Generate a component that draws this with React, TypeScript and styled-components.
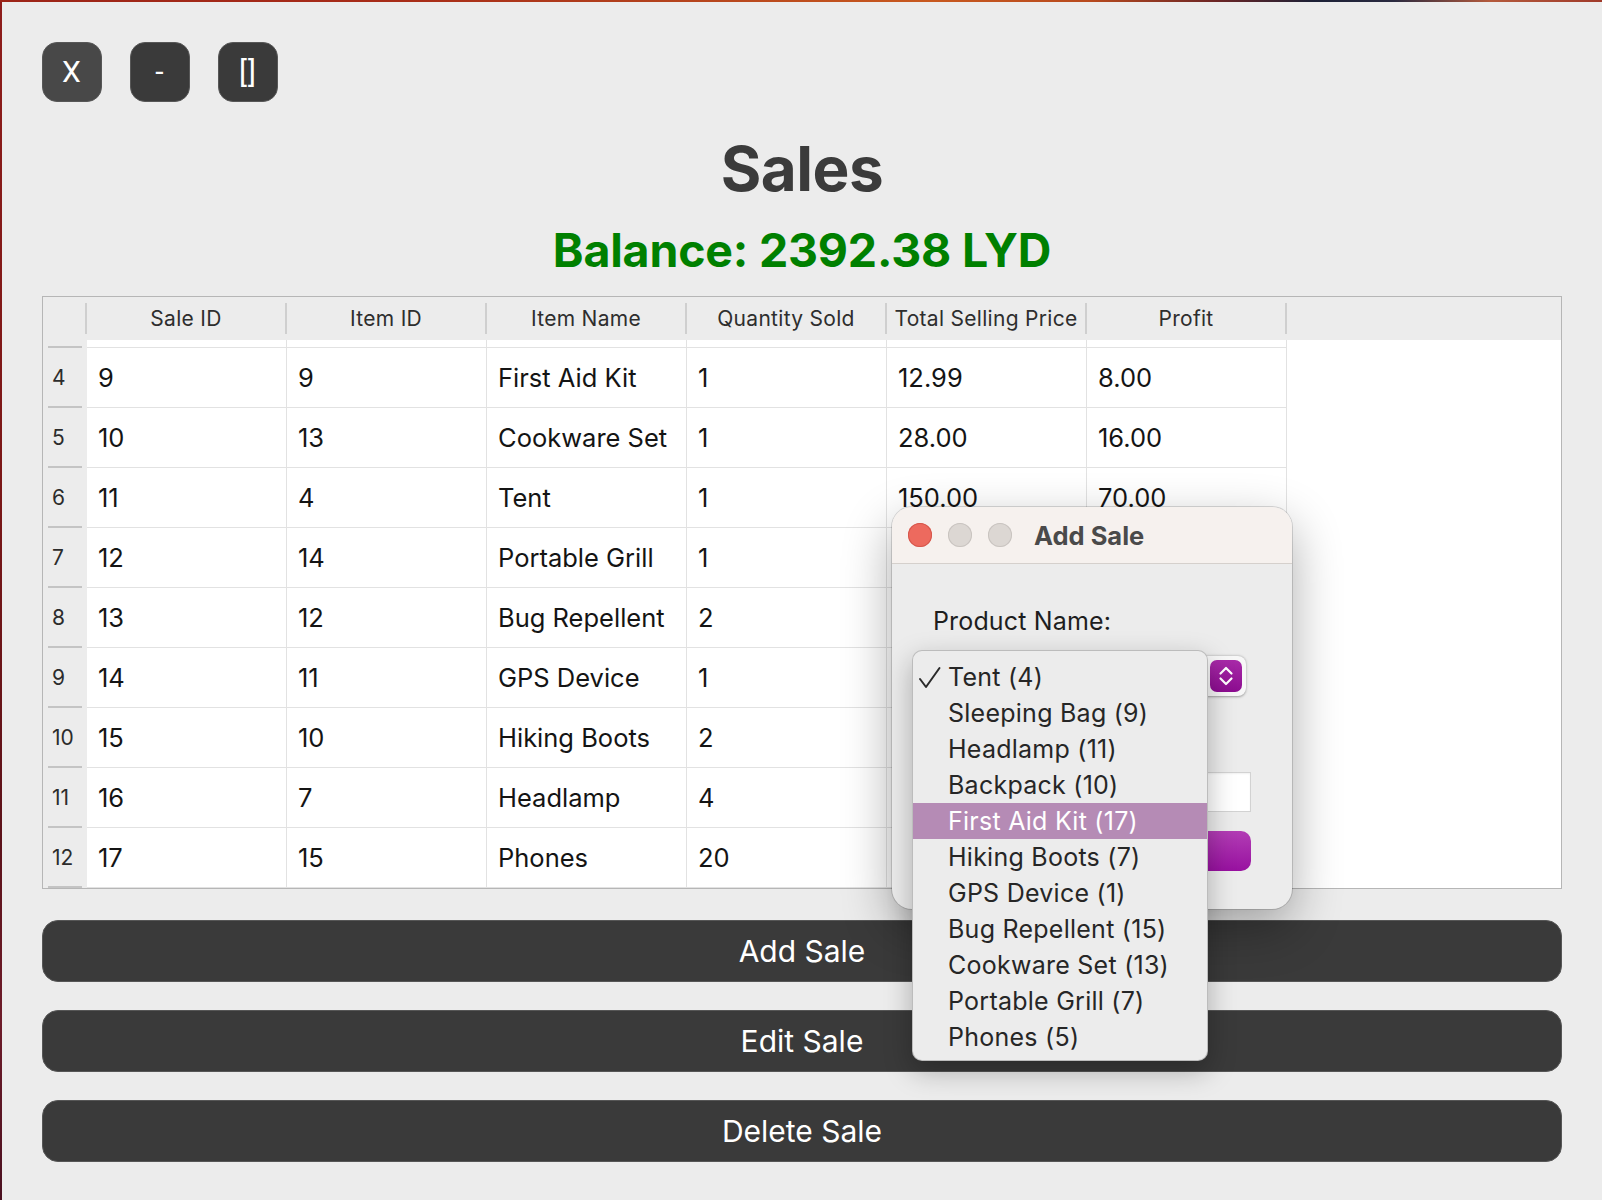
import React from "react";
import styled, { createGlobalStyle } from "styled-components";

const GlobalStyle = createGlobalStyle`
  html, body { margin: 0; padding: 0; background: #ececec; }
  body { font-family: Inter, "Noto Sans", sans-serif; -webkit-font-smoothing: antialiased; }
  * { box-sizing: border-box; }
`;

const Screen = styled.div`
  position: relative;
  width: 1602px;
  height: 1200px;
  overflow: hidden;
  display: flex;
  flex-direction: column;
  background: #ececec;
`;

const DesktopStrip = styled.div`
  height: 2px;
  flex: none;
  background: linear-gradient(90deg, #9c2417 0%, #a82c18 25%, #b2401c 40%, #c8591f 58%, #b84a1e 68%, #6b2525 76%, #1c2036 82%, #2a2a40 87%, #b45a3c 93%, #a03a2a 100%);
`;

const Stage = styled.div`
  flex: 1;
  display: flex;
`;

const DesktopEdge = styled.div`
  width: 2px;
  flex: none;
  background: linear-gradient(180deg, #8e1d1b 0%, #7b1717 40%, #5c121a 70%, #6e1c2a 85%, #4a1020 100%);
`;

const AppWindow = styled.main`
  flex: 1;
  padding: 40px 40px 0 40px;
  display: flex;
  flex-direction: column;
`;

const Controls = styled.div`
  display: flex;
  gap: 28px;
`;

const ControlButton = styled.button<{ $hover?: boolean }>`
  width: 60px;
  height: 60px;
  border-radius: 15px;
  border: 1.5px solid #575757;
  background: ${(p) => (p.$hover ? "#484848" : "#3a3a3a")};
  color: #ffffff;
  font-family: Roboto, "Liberation Sans", sans-serif;
  font-size: 30px;
  line-height: 1;
  letter-spacing: 1px;
  padding: 0;
  display: flex;
  align-items: center;
  justify-content: center;
`;

const Title = styled.h1`
  margin: 36px 0 0;
  text-align: center;
  font-size: 62px;
  line-height: 62px;
  font-weight: 700;
  color: #3b3b3b;
  letter-spacing: -0.5px;
`;

const Balance = styled.h2`
  margin: 28px 0 0;
  text-align: center;
  font-size: 46.5px;
  line-height: 45px;
  font-weight: 700;
  color: #008000;
  letter-spacing: -0.2px;
`;

const TableFrame = styled.div`
  margin-top: 23px;
  border: 1px solid #b6b6b6;
  background: #ffffff;
  display: flex;
  flex-direction: column;
`;

const columns = "44px repeat(6, 200px) 1fr";

const HeaderRow = styled.div`
  display: grid;
  grid-template-columns: ${columns};
  height: 43px;
  background: #ececec;
`;

const HeaderCell = styled.div`
  margin: 6px 0;
  border-right: 2px solid #cfcfcf;
  display: flex;
  align-items: center;
  justify-content: center;
  font-size: 21px;
  color: #2e2e2e;
  letter-spacing: 0.3px;
  white-space: nowrap;
`;

const HeaderFiller = styled.div`
  background: #ececec;
`;

const DataRow = styled.div<{ $h: number }>`
  display: grid;
  grid-template-columns: ${columns};
  height: ${(p) => p.$h}px;
`;

const RowHead = styled.div`
  background: #ececec;
  display: flex;
  flex-direction: column;
`;

const RowHeadLabel = styled.span`
  flex: 1;
  display: flex;
  align-items: center;
  padding-left: 9px;
  font-size: 21px;
  color: #2c2c2c;
`;

const RowHeadRule = styled.span`
  height: 2px;
  margin: 0 5px;
  background: #c4c4c4;
  flex: none;
`;

const Cell = styled.div`
  border-right: 1px solid #e2e2e2;
  border-bottom: 1px solid #e2e2e2;
  padding-left: 11px;
  display: flex;
  align-items: center;
  font-size: 25.5px;
  color: #141414;
  white-space: nowrap;
  overflow: hidden;
`;

const Filler = styled.div``;

const Actions = styled.div`
  margin-top: 31px;
  display: flex;
  flex-direction: column;
  gap: 28px;
`;

const ActionButton = styled.button`
  height: 62px;
  width: 100%;
  border-radius: 16px;
  border: 1.5px solid #565656;
  background: #3a3a3a;
  color: #ffffff;
  font-family: Inter, "Noto Sans", sans-serif;
  font-size: 30px;
  padding: 0;
`;

/* ---------- dialog ---------- */

const Dialog = styled.section`
  position: absolute;
  left: 892px;
  top: 507px;
  width: 400px;
  height: 402px;
  background: #ececec;
  border-radius: 20px;
  overflow: hidden;
  box-shadow: 0 0 0 1px rgba(0, 0, 0, 0.14), 0 18px 50px rgba(0, 0, 0, 0.33);
  z-index: 2;
  display: flex;
  flex-direction: column;
`;

const TitleBar = styled.header`
  height: 57px;
  flex: none;
  background: #f6f1ee;
  border-bottom: 1px solid #d5d0cc;
  display: flex;
  align-items: center;
  padding-left: 16px;
`;

const Lights = styled.div`
  display: flex;
  gap: 16px;
  margin-right: 22px;
`;

const Light = styled.span<{ $color: string; $ring: string }>`
  width: 24px;
  height: 24px;
  border-radius: 50%;
  background: ${(p) => p.$color};
  box-shadow: inset 0 0 0 1px ${(p) => p.$ring};
`;

const DialogTitle = styled.span`
  font-size: 25.5px;
  font-weight: 700;
  color: #4a4a4a;
`;

const DialogBody = styled.div`
  flex: 1;
  padding: 42px 41px 0 41px;
  display: flex;
  flex-direction: column;
`;

const FieldLabel = styled.label`
  font-size: 25px;
  line-height: 30px;
  color: #1e1e1e;
  letter-spacing: 0.15px;
`;

const Combo = styled.div`
  margin-top: 20px;
  margin-right: 5px;
  height: 40px;
  border-radius: 8px;
  background: #f7f7f7;
  box-shadow: 0 0.5px 2.5px rgba(0, 0, 0, 0.35);
  display: flex;
  align-items: center;
  justify-content: flex-end;
  padding: 0 4px;
`;

const Stepper = styled.span`
  width: 32px;
  height: 32px;
  border-radius: 7px;
  background: linear-gradient(180deg, #a82aa8 0%, #8c0c90 100%);
  display: flex;
  align-items: center;
  justify-content: center;
`;

const TextInput = styled.input`
  margin-top: 76px;
  height: 40px;
  background: #ffffff;
  border: 1px solid #d2d2d2;
  box-shadow: inset 0 1px 2px rgba(0, 0, 0, 0.06);
  outline: none;
`;

const SubmitButton = styled.button`
  margin-top: 19px;
  height: 40px;
  border: none;
  border-radius: 10px;
  background: linear-gradient(180deg, #b23db4 0%, #9811a0 100%);
`;

/* ---------- popup menu ---------- */

const Popup = styled.ul`
  position: absolute;
  left: 912px;
  top: 650px;
  width: 296px;
  margin: 0;
  padding: 8px 0 5px;
  list-style: none;
  background: #ececec;
  border-radius: 10px;
  border: 1px solid rgba(0, 0, 0, 0.2);
  box-shadow: 0 10px 28px rgba(0, 0, 0, 0.28);
  z-index: 3;
`;

const PopupItem = styled.li<{ $active?: boolean }>`
  height: 36px;
  display: flex;
  align-items: center;
  padding-left: 5px;
  font-size: 25px;
  letter-spacing: 0.25px;
  color: ${(p) => (p.$active ? "#ffffff" : "#262626")};
  background: ${(p) => (p.$active ? "#b58bb5" : "transparent")};
  white-space: nowrap;
`;

const CheckSlot = styled.span`
  width: 30px;
  flex: none;
  display: flex;
  align-items: center;
`;

const rows = [
  { n: 4, c: ["9", "9", "First Aid Kit", "1", "12.99", "8.00"] },
  { n: 5, c: ["10", "13", "Cookware Set", "1", "28.00", "16.00"] },
  { n: 6, c: ["11", "4", "Tent", "1", "150.00", "70.00"] },
  { n: 7, c: ["12", "14", "Portable Grill", "1", "45.00", "20.00"] },
  { n: 8, c: ["13", "12", "Bug Repellent", "2", "16.00", "8.00"] },
  { n: 9, c: ["14", "11", "GPS Device", "1", "120.00", "40.00"] },
  { n: 10, c: ["15", "10", "Hiking Boots", "2", "180.00", "60.00"] },
  { n: 11, c: ["16", "7", "Headlamp", "4", "80.00", "32.00"] },
  { n: 12, c: ["17", "15", "Phones", "20", "4000.00", "1000.00"] },
];

const headers = ["Sale ID", "Item ID", "Item Name", "Quantity Sold", "Total Selling Price", "Profit"];

const products = [
  "Tent (4)",
  "Sleeping Bag (9)",
  "Headlamp (11)",
  "Backpack (10)",
  "First Aid Kit (17)",
  "Hiking Boots (7)",
  "GPS Device (1)",
  "Bug Repellent (15)",
  "Cookware Set (13)",
  "Portable Grill (7)",
  "Phones (5)",
];

const Check = () => (
  <svg width="23" height="23" viewBox="0 0 23 23" fill="none">
    <path d="M2 13 L8 21 L21.5 2" stroke="#2a2a2a" strokeWidth="2" strokeLinecap="round" strokeLinejoin="round" />
  </svg>
);

const Chevrons = () => (
  <svg width="16" height="24" viewBox="0 0 16 24" fill="none">
    <path d="M2.5 9.5 L8 4 L13.5 9.5" stroke="#fff" strokeWidth="2.2" strokeLinecap="round" strokeLinejoin="round" />
    <path d="M2.5 14.5 L8 20 L13.5 14.5" stroke="#fff" strokeWidth="2.2" strokeLinecap="round" strokeLinejoin="round" />
  </svg>
);

export default function App() {
  return (
    <Screen>
      <GlobalStyle />
      <DesktopStrip />
      <Stage>
        <DesktopEdge />
        <AppWindow>
          <Controls>
            <ControlButton $hover>X</ControlButton>
            <ControlButton>-</ControlButton>
            <ControlButton>[]</ControlButton>
          </Controls>
          <Title>Sales</Title>
          <Balance>Balance: 2392.38 LYD</Balance>
          <TableFrame>
            <HeaderRow>
              <HeaderCell />
              {headers.map((h) => (
                <HeaderCell key={h}>{h}</HeaderCell>
              ))}
              <HeaderFiller />
            </HeaderRow>
            <DataRow $h={8}>
              <RowHead>
                <RowHeadLabel />
                <RowHeadRule />
              </RowHead>
              {headers.map((h) => (
                <Cell key={h} />
              ))}
              <Filler />
            </DataRow>
            {rows.map((r) => (
              <DataRow $h={60} key={r.n}>
                <RowHead>
                  <RowHeadLabel>{r.n}</RowHeadLabel>
                  <RowHeadRule />
                </RowHead>
                {r.c.map((v, i) => (
                  <Cell key={i}>{v}</Cell>
                ))}
                <Filler />
              </DataRow>
            ))}
          </TableFrame>
          <Actions>
            <ActionButton>Add Sale</ActionButton>
            <ActionButton>Edit Sale</ActionButton>
            <ActionButton>Delete Sale</ActionButton>
          </Actions>
        </AppWindow>
      </Stage>

      <Dialog>
        <TitleBar>
          <Lights>
            <Light $color="#ed6a5e" $ring="#d5574c" />
            <Light $color="#dcd7d3" $ring="#c9c4c0" />
            <Light $color="#dcd7d3" $ring="#c9c4c0" />
          </Lights>
          <DialogTitle>Add Sale</DialogTitle>
        </TitleBar>
        <DialogBody>
          <FieldLabel>Product Name:</FieldLabel>
          <Combo>
            <Stepper>
              <Chevrons />
            </Stepper>
          </Combo>
          <TextInput aria-label="Quantity" />
          <SubmitButton aria-label="Add Sale" />
        </DialogBody>
      </Dialog>

      <Popup>
        {products.map((p, i) => (
          <PopupItem key={p} $active={i === 4}>
            <CheckSlot>{i === 0 ? <Check /> : null}</CheckSlot>
            {p}
          </PopupItem>
        ))}
      </Popup>
    </Screen>
  );
}
